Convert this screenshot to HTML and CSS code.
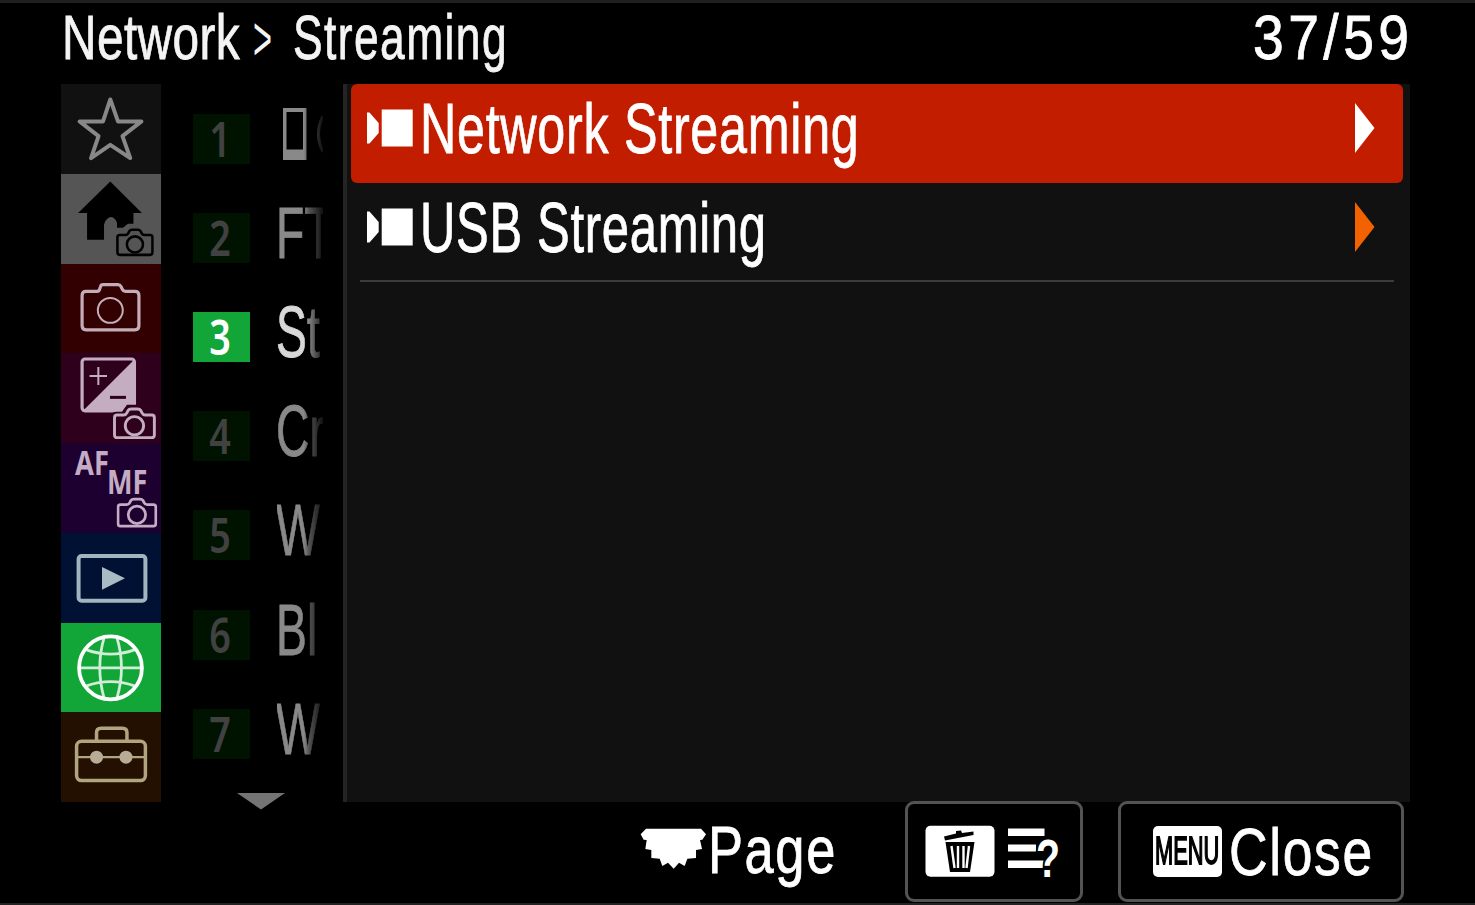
FILE: index.html
```html
<!DOCTYPE html>
<html lang="en">
<head>
<meta charset="utf-8">
<title>Network &gt; Streaming</title>
<link rel="stylesheet" href="styles.css">
</head>
<body>
<svg width="0" height="0" class="defs" aria-hidden="true">
  <symbol id="movie" viewBox="0 0 46 38"><path d="M0 3.500h2.500l9.200 10.500v10l-9.200 10.500H0zM14.700.500h31v37h-31z" fill="#fff"/></symbol>
  <symbol id="cam" viewBox="0 0 40 31"><path d="M4 8h6q2 0 3-2l1-2q1-1.500 3-1.500h6q2 0 3 1.500l1 2q1 2 3 2h6q2.500 0 2.500 2.500v16q0 2.500-2.500 2.500H4q-2.500 0-2.500-2.500v-16Q1.500 8 4 8z" fill="none" stroke="currentColor" stroke-width="2.700"/><circle cx="20" cy="18" r="8.500" fill="none" stroke="currentColor" stroke-width="2.700"/></symbol>
</svg>
<div class="screen">
  <header class="header">
    <h1 class="crumbs"><span class="txt crumb-a">Network</span><span class="txt crumb-sep">&gt;</span><span class="txt crumb-b">Streaming</span></h1>
    <span class="txt counter">37/59</span>
  </header>
  <main class="main">
    <nav class="tabs">
      <svg class="tab tab-star" viewBox="0 0 100 90"><path d="M49.300 15.500 57 37.500H80.500L61.500 52.300 69.300 74.300 49.300 61 30 74.300 37.500 52.300 18.500 37.500H42z" fill="none" stroke="#888" stroke-width="4" stroke-linejoin="round"/></svg>
      <svg class="tab tab-home" viewBox="0 0 100 90"><path d="M49.300 7.500 81 39H72.500V50H67L62 54H56V49Q54 43 49.300 43 44 45 43 51V66H26V39H17z"/><use href="#cam" x="55" y="53" width="38" height="30.500" preserveAspectRatio="none"/></svg>
      <svg class="tab tab-shoot" viewBox="0 0 100 90" fill="none" stroke="#c4adb9"><path d="M25 27.500h11q2 0 2.500-2l1-3q.5-1.800 2.500-1.800h15q2 0 3 1.800l1.500 3q1 2 3 2H74q4 0 4 4V62q0 4-4 4H25q-4 0-4-4V31.500q0-4 4-4z" stroke-width="3.200"/><circle cx="49.300" cy="46.500" r="12.500" stroke-width="2"/></svg>
      <svg class="tab tab-exp" viewBox="0 0 100 90"><path d="M74 6V59H21z" fill="#c4adc0"/><rect x="21" y="6" width="52.500" height="52" rx="3" fill="none" stroke="#c4adc0" stroke-width="3.200"/><path d="M28.500 23h17.500M37.300 14v18" stroke="#c4adc0" stroke-width="2"/><path d="M49 44.500h16" stroke="#2f001c" stroke-width="3"/><path d="M49 88V64q1-5 7-5h5l5-7h16v36z" fill="#2f001c"/><use href="#cam" x="51.500" y="53.500" width="44" height="33.500" preserveAspectRatio="none" color="#c4adc0"/></svg>
      <svg class="tab tab-focus" viewBox="0 0 100 90"><g fill="#c4adc4" class="focus-text"><text x="14" y="32.500" textLength="34" lengthAdjust="spacingAndGlyphs">AF</text><text x="46" y="51" textLength="40.500" lengthAdjust="spacingAndGlyphs">MF</text></g><use href="#cam" x="55.500" y="53.500" width="41" height="32" preserveAspectRatio="none" color="#c4adc4"/></svg>
      <svg class="tab tab-play" viewBox="0 0 100 90"><rect x="17.500" y="23" width="67" height="45" rx="3" fill="none" stroke="#9fb6bf" stroke-width="4"/><path d="M41 34 64 45.500 41 57z" fill="#a9bcc4"/></svg>
      <svg class="tab tab-net" viewBox="0 0 100 90" fill="none" stroke="#fff"><circle cx="49.500" cy="45" r="31.500" stroke-width="3.800"/><path d="M18 45H81M43 15Q34.500 45 43 75M56 15Q65 45 56 75M25.500 27Q49.500 35.500 73.500 27M25.500 63Q49.500 54.500 73.500 63" stroke-width="2.800" opacity=".8"/></svg>
      <svg class="tab tab-setup" viewBox="0 0 100 90" fill="none" stroke="#b0a57e" stroke-width="3.500"><g transform="translate(0 1.800)"><rect x="15.500" y="27.500" width="69" height="39.500" rx="5"/><path d="M35.500 27V19q0-4.500 4.500-4.500h21.500q4.500 0 4.500 4.500v8"/><path d="M16 43.500H84" stroke-width="2.200"/><g fill="#b9ac97" stroke="none"><circle cx="35.500" cy="43.500" r="6.500"/><circle cx="65" cy="43.500" r="6.500"/></g></g></svg>
    </nav>
    <section class="groups">
      <div class="group"><b class="num"><i>1</i></b><span class="label"><svg class="phone" width="46" height="56" viewBox="0 0 46 56"><path d="M6 2h23.500v52H6zM9.500 6v37.500h16.500V6z" fill="#898989" fill-rule="evenodd"/><path d="M46 10Q37 28 46 46" fill="none" stroke="#898989" stroke-width="3"/></svg></span></div>
      <div class="group"><b class="num"><i>2</i></b><span class="label"><span class="txt">FT</span></span></div>
      <div class="group on"><b class="num"><i>3</i></b><span class="label"><span class="txt">St</span></span></div>
      <div class="group"><b class="num"><i>4</i></b><span class="label"><span class="txt">Cr</span></span></div>
      <div class="group"><b class="num"><i>5</i></b><span class="label"><span class="txt">W</span></span></div>
      <div class="group"><b class="num"><i>6</i></b><span class="label"><span class="txt">Bl</span></span></div>
      <div class="group"><b class="num"><i>7</i></b><span class="label"><span class="txt">W</span></span></div>
      <svg class="more" width="48" height="17" viewBox="0 0 48 17"><path d="M0 0H48L24 16.500z" fill="#747474"/></svg>
    </section>
    <section class="panel">
      <div class="item selected"><svg class="movie"><use href="#movie"/></svg><span class="txt item-a">Network Streaming</span><svg class="arrow" viewBox="0 0 20 50"><path d="M0 0 19.500 25 0 50z" fill="#fff"/></svg></div>
      <div class="item"><svg class="movie"><use href="#movie"/></svg><span class="txt item-b">USB Streaming</span><svg class="arrow" viewBox="0 0 20 50"><path d="M0 0 19.500 25 0 50z" fill="#f26200"/></svg></div>
      <hr class="rule">
    </section>
  </main>
  <footer class="footer">
    <div class="page"><svg class="dial" viewBox="60 115 200 125"><path d="M78 117H243L258 134 247 150 240 151 246 178 228 181 228 205 202 207 194 229 177 219 161 237 144 219 127 229 119 207 94 205 94 181 76 178 80 151 71 150 62 134z" fill="#fff"/></svg><span class="txt page-label">Page</span></div>
    <div class="button help">
      <svg width="70" height="52" viewBox="0 0 70 52"><rect x=".5" y=".7" width="69" height="51" rx="5" fill="#fff"/><path d="M19 11.500 31 8.500 31 6 36 5.500 37 8 48.500 6.500V10L20 15.500z"/><path d="M20.500 17H49.500L45 47H25z"/><path d="M26.500 21 29.500 43M33 21V43M38.500 21V43M44 21 41.500 43" stroke="#fff" stroke-width="2.400"/></svg>
      <svg class="list-help" width="54" height="52" viewBox="0 0 54 52"><path d="M1 3.500h36.500v7.500H1zM1 19.500h28v7H1zM1 35.500h35.500v7.500H1z" fill="#fff"/><text x="29" y="51.500" textLength="24" lengthAdjust="spacingAndGlyphs">?</text></svg>
    </div>
    <div class="button close"><span class="menu-key"><span class="txt">MENU</span></span><span class="txt close-label">Close</span></div>
  </footer>
</div>
</body>
</html>
```
FILE: styles.css
```css
* { box-sizing: border-box; }
body { margin: 0; background: #000; color: #fff; font-family: "Liberation Sans", Arial, sans-serif; }
.defs { position: absolute; }
.screen { width: 1475px; height: 905px; border-top: 3px solid #202020; border-bottom: 2px solid #232323; overflow: hidden; background: #000; display: flex; flex-direction: column; }
.txt { display: block; flex: none; white-space: nowrap; transform-origin: 0 50%; line-height: 80px; -webkit-text-stroke: .8px currentColor; }

.header { height: 81px; flex: none; display: flex; justify-content: space-between; padding: 0 66px 0 61px; font-size: 62.500px; line-height: 80px; }
.crumbs { margin: 0; font: inherit; display: flex; margin-top: -6px; color: #f4f4f4; }
.crumb-a { width: 191px; letter-spacing: .5px; transform: translateX(1px) scaleX(.765); }
.crumb-sep { width: 40px; transform: translate(1px, 1px) scaleX(.52); -webkit-text-stroke: 0; }
.crumb-b { letter-spacing: 2px; transform: translateX(1px) scaleX(.71); }
.counter { width: 156px; margin-top: -6px; letter-spacing: 5px; transform: scaleX(.885); }

.main { height: 718px; flex: none; display: flex; padding-left: 61px; }
.tabs { width: 100px; flex: none; display: grid; grid-template-rows: repeat(8, 1fr); }
.tab { width: 100px; height: 89.750px; display: block; }
.tab-star { background: #111; }
.tab-home { background: #555; color: #000; }
.tab-shoot { background: #320000; }
.tab-exp { background: #2f001c; }
.tab-focus { background: #1e0030; }
.tab-play { background: #001133; }
.tab-net { background: #12a538; }
.tab-setup { background: #231000; }
.focus-text { font-family: "Noto Sans", sans-serif; font-weight: 700; font-size: 34px; }

.groups { width: 182px; flex: none; padding: 5px 0 0 32px; }
.group { height: 99.200px; display: flex; align-items: center; gap: 27px; color: #898989; }
.num { width: 57px; height: 50px; background: #001300; color: #414141; display: flex; justify-content: center; align-items: center; }
.num i { font: 600 49px/50px "Noto Sans", sans-serif; transform: translate(-1px, -1px) scaleX(.77); }
.label { width: 46px; height: 80px; overflow: hidden; font-size: 72px; -webkit-mask-image: linear-gradient(90deg, #000 58%, rgba(0,0,0,.6) 70%, rgba(0,0,0,.12)); mask-image: linear-gradient(90deg, #000 58%, rgba(0,0,0,.6) 70%, rgba(0,0,0,.12)); }
.label .txt { letter-spacing: 0; transform: translate(-1px, -5px) scaleX(.645); }
.phone { display: block; margin-top: 7px; }
.on { color: #d8d8d8; }
.on .num { background: #12a538; color: #fff; }
.more { display: block; margin: 10px 0 0 44px; }

.panel { width: 1067px; background: #111; border-left: 4px solid #242424; padding-left: 4px; }
.item { width: 1052px; height: 99px; padding: 0 28px 0 16px; display: flex; align-items: center; border-radius: 6px; font-size: 71px; }
.selected { background: #c31d00; }
.movie { width: 46px; height: 38px; flex: none; margin: -11px 5px 0 0; }
.item .txt { margin-top: -10px; }
.item-a { width: 500px; letter-spacing: 1px; transform: translateX(2px) scaleX(.708); }
.item-b { width: 500px; letter-spacing: 1px; transform: translateX(2px) scaleX(.69); }
.arrow { width: 20px; height: 50px; margin: -11px 0 0 auto; flex: none; }
.rule { width: 1034px; height: 2px; margin: -2px 0 0 9px; border: 0; background: #3b3b3b; }

.footer { height: 101px; flex: none; margin-top: -1px; padding-left: 640px; display: flex; position: relative; }
.page { width: 265px; display: flex; padding-top: 9px; font-size: 66px; }
.dial { width: 66.700px; height: 41.700px; margin-top: 18px; flex: none; }
.page-label { letter-spacing: 2px; transform: translateX(1px) scaleX(.795); }
.button { height: 101px; border: 3px solid #535353; border-radius: 9px; display: flex; align-items: flex-start; padding-top: 21px; }
.help { width: 178px; padding-left: 17px; gap: 12px; }
.list-help text { font: 700 54px "Liberation Sans", sans-serif; fill: #fff; stroke: #000; stroke-width: 5px; paint-order: stroke; }
.close { width: 286px; margin-left: 35px; padding-left: 32px; }
.menu-key { width: 69px; height: 51px; margin-top: 1px; border-radius: 5px; background: #fff; color: #000; font-size: 39px; flex: none; overflow: hidden; }
.menu-key .txt { line-height: 50px; margin-left: 2px; transform: scaleX(.56); -webkit-text-stroke: 1.800px #000; }
.close-label { font-size: 66px; letter-spacing: 2px; margin: -13px 0 0 6px; transform: translateX(1px) scaleX(.81); }
```
